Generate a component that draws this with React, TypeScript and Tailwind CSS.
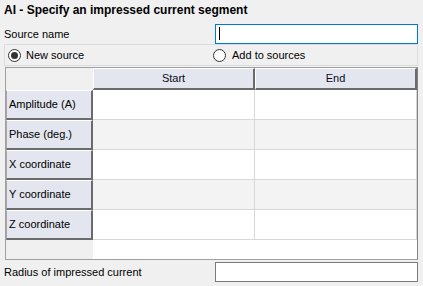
import React from "react";

const rows = ["Amplitude (A)", "Phase (deg.)", "X coordinate", "Y coordinate", "Z coordinate"];

function Radio({ checked }: { checked?: boolean }) {
  return (
    <span className="w-[13px] h-[13px] rounded-full border border-[#333333] bg-white flex items-center justify-center shrink-0">
      {checked && <span className="w-[7px] h-[7px] rounded-full bg-[#333333]" />}
    </span>
  );
}

export default function App() {
  return (
    <div
      className="w-[423px] h-[286px] bg-[#f0f0f0] pl-[4px] pr-[5px] text-[11px] text-black overflow-hidden"
      style={{ fontFamily: '"Liberation Sans", Arial, sans-serif' }}
    >
      <div className="h-[23px] pt-[3px] leading-[14px] font-bold text-[12px]">
        AI - Specify an impressed current segment
      </div>
      <div className="h-[21px] flex items-center">
        <span className="leading-[14px]">Source name</span>
        <div className="ml-auto w-[203px] h-[20px] border border-[#0078d7] bg-white flex items-center pl-[3px]">
          <span className="w-[1px] h-[13px] bg-black" />
        </div>
      </div>
      <div className="h-[22px] border border-[#dcdcdc] flex items-center">
        <div className="w-[208px] flex items-center pl-[3px] gap-[5px]">
          <Radio checked />
          <span>New source</span>
        </div>
        <div className="flex items-center gap-[6px]">
          <Radio />
          <span>Add to sources</span>
        </div>
      </div>
      <div className="mt-[1px] ml-[1px] w-[413px] h-[193px] border border-[#a0a0a0] border-r-[#828282] bg-white flex flex-col">
        <div className="h-[22px] flex shrink-0">
          <div className="w-[87px] bg-[#f0f0f0]" />
          <div className="w-[162px] bg-[#e3e6ee] border-t border-l border-t-white border-l-white border-b-2 border-r-2 border-b-[#6b6b6b] border-r-[#6b6b6b] flex items-center justify-center text-[#0a0a20]">
            Start
          </div>
          <div className="w-[162px] bg-[#e3e6ee] border-t border-l border-t-white border-l-white border-b-2 border-r-2 border-b-[#6b6b6b] border-r-[#6b6b6b] flex items-center justify-center text-[#0a0a20]">
            End
          </div>
        </div>
        {rows.map((r, i) => (
          <div key={r} className={"h-[30px] flex shrink-0 " + (i % 2 === 1 ? "bg-[#f3f3f3]" : "bg-white")}>
            <div className="w-[87px] bg-[#e3e6ee] border-t border-l border-t-white border-l-[#a8a8a8] border-b-2 border-r-2 border-b-[#6b6b6b] border-r-[#6b6b6b] flex items-center pl-[2px]">
              {r}
            </div>
            <div className="w-[162px] border-b border-r border-[#d8d8d8]" />
            <div className="w-[162px] border-b border-r border-[#d8d8d8]" />
          </div>
        ))}
        <div className="flex-1 flex">
          <div className="w-[87px] bg-[#f0f0f0]" />
          <div className="flex-1 bg-white" />
        </div>
      </div>
      <div className="mt-[1px] h-[21px] flex items-center">
        <span className="leading-[14px]">Radius of impressed current</span>
        <div className="ml-auto w-[203px] h-[20px] border border-[#7a7a7a] bg-white" />
      </div>
    </div>
  );
}
